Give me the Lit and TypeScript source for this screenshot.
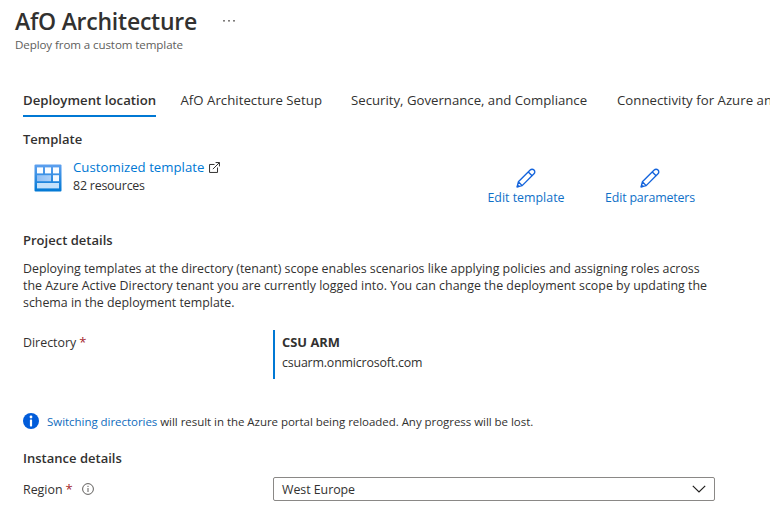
import { LitElement, html, css, svg } from "lit";
import { customElement } from "lit/decorators.js";

const tabs = [
  { label: "Deployment location", cls: "tab active" },
  { label: "AfO Architecture Setup", cls: "tab" },
  { label: "Security, Governance, and Compliance", cls: "tab" },
  { label: "Connectivity for Azure and", cls: "tab last" },
];

const pencil = html`<svg class="pencil" width="20" height="20" viewBox="0 0 22 22" fill="none" stroke="#1464dc" stroke-width="1.5" stroke-linejoin="round" stroke-linecap="round">
  <path d="M1.2 20.8 L2.6 15.2 L15.6 2.2 A2.95 2.95 0 0 1 19.8 6.4 L6.8 19.4 Z M13.5 4.3 L17.7 8.5 M2.6 15.2 L6.8 19.4" />
  <path d="M1.2 20.8 L1.9 18.2 L3.8 20.1 Z" fill="#1464dc" stroke-width="0.6" />
</svg>`;

const templateIcon = html`<svg class="template-icon" width="28" height="28" viewBox="0 0 28 28">
  <defs>
    <linearGradient id="tile" x1="0" y1="0" x2="0" y2="1">
      <stop offset="0" stop-color="#5ea0ef" />
      <stop offset="1" stop-color="#0078d4" />
    </linearGradient>
    <linearGradient id="wide" x1="0" y1="0" x2="1" y2="0">
      <stop offset="0" stop-color="#8fbff5" />
      <stop offset="1" stop-color="#abd0f8" />
    </linearGradient>
  </defs>
  <rect x=".5" y=".5" width="27" height="27" rx="1" fill="url(#tile)" />
  ${[3, 11, 19].map((x) => svg`<rect x=${x} y="3.4" width="6" height="6" fill="#fbfdff" />`)}
  <rect x="3" y="11.2" width="14" height="6" fill="url(#wide)" />
  <rect x="19" y="11.2" width="6" height="6" fill="#f3f9ff" />
  <rect x="3" y="19" width="22" height="5.4" fill="#c3e1fb" />
</svg>`;

@customElement("app-root")
export class AppRoot extends LitElement {
  static styles = css`
    :host {
      display: block;
      width: 770px;
      height: 528px;
      overflow: hidden;
      background: #fff;
      color: #323130;
      font: 12.4px/17px "Open Sans", "Noto Sans", sans-serif;
    }
    * { box-sizing: border-box; }
    h1, h2, p { margin: 0; }
    svg { display: block; flex: none; }
    header { padding: 6px 0 0 15px; height: 89px; }
    .title-row { display: flex; align-items: center; gap: 26px; height: 30px; }
    h1 { width: 182px; white-space: nowrap; font-size: 23px; line-height: 30px; font-weight: 600; letter-spacing: -0.24px; }
    .subtitle { font-size: 11.6px; line-height: 16px; margin-top: 1px; letter-spacing: -0.11px; color: #605e5c; }
    nav { display: flex; height: 28px; padding-left: 23px; gap: 25px; white-space: nowrap; }
    .tab { flex: none; width: 143px; font-size: 13.2px; line-height: 22px; letter-spacing: 0.03px; }
    .tab:nth-child(2) { margin-left: -0.5px; }
    .tab:nth-child(3) { width: 241px; margin-left: 2.5px; letter-spacing: 0; }
    .active { width: 133px; font-weight: 600; border-bottom: 2px solid #0078d4; }
    main { padding-left: 23px; }
    h2 { font-size: 13px; line-height: 18px; font-weight: 600; letter-spacing: 0.01px; }
    a { color: #0f6cbd; text-decoration: none; }
    .template-heading { margin-top: 13px; }
    .template-row { display: flex; height: 62px; margin-top: 9px; }
    .template-icon { margin: 7px 0 0 11px; }
    .template-text { width: 404.5px; margin-left: 11px; padding-top: 1px; }
    .template-link { display: flex; gap: 5px; height: 18px; align-items: center; font-size: 13.2px; letter-spacing: 0.02px; color: #0078d4; }
    .count { line-height: 18px; padding-top: 1px; letter-spacing: -0.2px; }
    .action { display: flex; flex-direction: column; align-items: center; width: 97px; padding-top: 10px; line-height: 18px; color: #0f70c8; white-space: nowrap; }
    .action + .action { margin-left: 15.5px; width: 120px; letter-spacing: -0.17px; }
    .pencil { margin: 1px 1px 1px 0; }
    .project-heading { margin-top: 12px; }
    .description { margin-top: 11px; white-space: nowrap; letter-spacing: -0.01px; }
    .description span { display: block; }
    .description .middle { letter-spacing: 0.01px; }
    .field { display: flex; }
    .label { width: 250px; display: flex; gap: 3px; }
    .required { color: #a4262c; font-size: 13px; }
    .directory { margin-top: 19px; height: 49px; }
    .directory .label { padding-top: 4px; }
    .directory-value { border-left: 2px solid #0078d4; padding: 2px 0 0 7px; line-height: 20px; }
    .directory-value strong { display: block; font-size: 12.9px; }
    .domain { padding-top: 1px; letter-spacing: -0.18px; }
    .notice { display: flex; align-items: center; gap: 8px; margin-top: 33px; height: 18px; font-size: 11.5px; letter-spacing: -0.04px; white-space: nowrap; }
    .instance-heading { margin-top: 19px; }
    .region { margin-top: 10px; height: 24px; align-items: center; }
    .region .label { align-items: center; }
    .hint { margin-left: 6px; }
    .select { width: 442px; height: 24px; border: 1px solid #8a8886; border-radius: 2px; padding: 0 8px; display: flex; align-items: center; justify-content: space-between; letter-spacing: -0.04px; }
  `;

  render() {
    return html`
      <header>
        <div class="title-row">
          <h1>AfO Architecture</h1>
          <svg width="12" height="4" viewBox="0 0 12 4" fill="#605e5c">
            <rect x="0.2" y="1" width="1.6" height="1.6" /><rect x="5.2" y="1" width="1.6" height="1.6" /><rect x="10.2" y="1" width="1.6" height="1.6" />
          </svg>
        </div>
        <p class="subtitle">Deploy from a custom template</p>
      </header>
      <nav>${tabs.map((t) => html`<div class=${t.cls}>${t.label}</div>`)}</nav>
      <main>
        <h2 class="template-heading">Template</h2>
        <div class="template-row">
          ${templateIcon}
          <div class="template-text">
            <a class="template-link">Customized template
              <svg width="11" height="11" viewBox="0 0 12 12" fill="none" stroke="#323130" stroke-width="1.09">
                <path d="M6 2.7H.6V11.4H9.3V6M7.2 .6H11.4V4.8M11.3 .7L4.2 7.8" />
              </svg>
            </a>
            <div class="count">82 resources</div>
          </div>
          <a class="action">${pencil}<span>Edit template</span></a>
          <a class="action">${pencil}<span>Edit parameters</span></a>
        </div>
        <h2 class="project-heading">Project details</h2>
        <p class="description">
          <span>Deploying templates at the directory (tenant) scope enables scenarios like applying policies and assigning roles across</span>
          <span class="middle">the Azure Active Directory tenant you are currently logged into. You can change the deployment scope by updating the</span>
          <span>schema in the deployment template.</span>
        </p>
        <div class="field directory">
          <div class="label"><span>Directory</span><span class="required">*</span></div>
          <div class="directory-value"><strong>CSU ARM</strong><div class="domain">csuarm.onmicrosoft.com</div></div>
        </div>
        <div class="notice">
          <svg width="16" height="16" viewBox="0 0 16 16">
            <circle cx="8" cy="8" r="8" fill="#015cda" />
            <circle cx="8" cy="4" r="1.4" fill="#fff" /><rect x="6.9" y="6.4" width="2.2" height="7" rx=".6" fill="#fff" />
          </svg>
          <span><a>Switching directories</a> will result in the Azure portal being reloaded. Any progress will be lost.</span>
        </div>
        <h2 class="instance-heading">Instance details</h2>
        <div class="field region">
          <div class="label">
            <span>Region</span><span class="required">*</span>
            <svg class="hint" width="12" height="12" viewBox="0 0 12 12">
              <circle cx="6" cy="6" r="5.4" fill="none" stroke="#605e5c" />
              <rect x="5.5" y="2.8" width="1" height="1.2" fill="#605e5c" /><rect x="5.5" y="5" width="1" height="4" fill="#605e5c" />
            </svg>
          </div>
          <div class="select">
            <span>West Europe</span>
            <svg width="14" height="8" viewBox="0 0 14 8" fill="none" stroke="#201f1e" stroke-width="1.2"><path d="M.8 .8L7 7L13.2 .8" /></svg>
          </div>
        </div>
      </main>
    `;
  }
}
